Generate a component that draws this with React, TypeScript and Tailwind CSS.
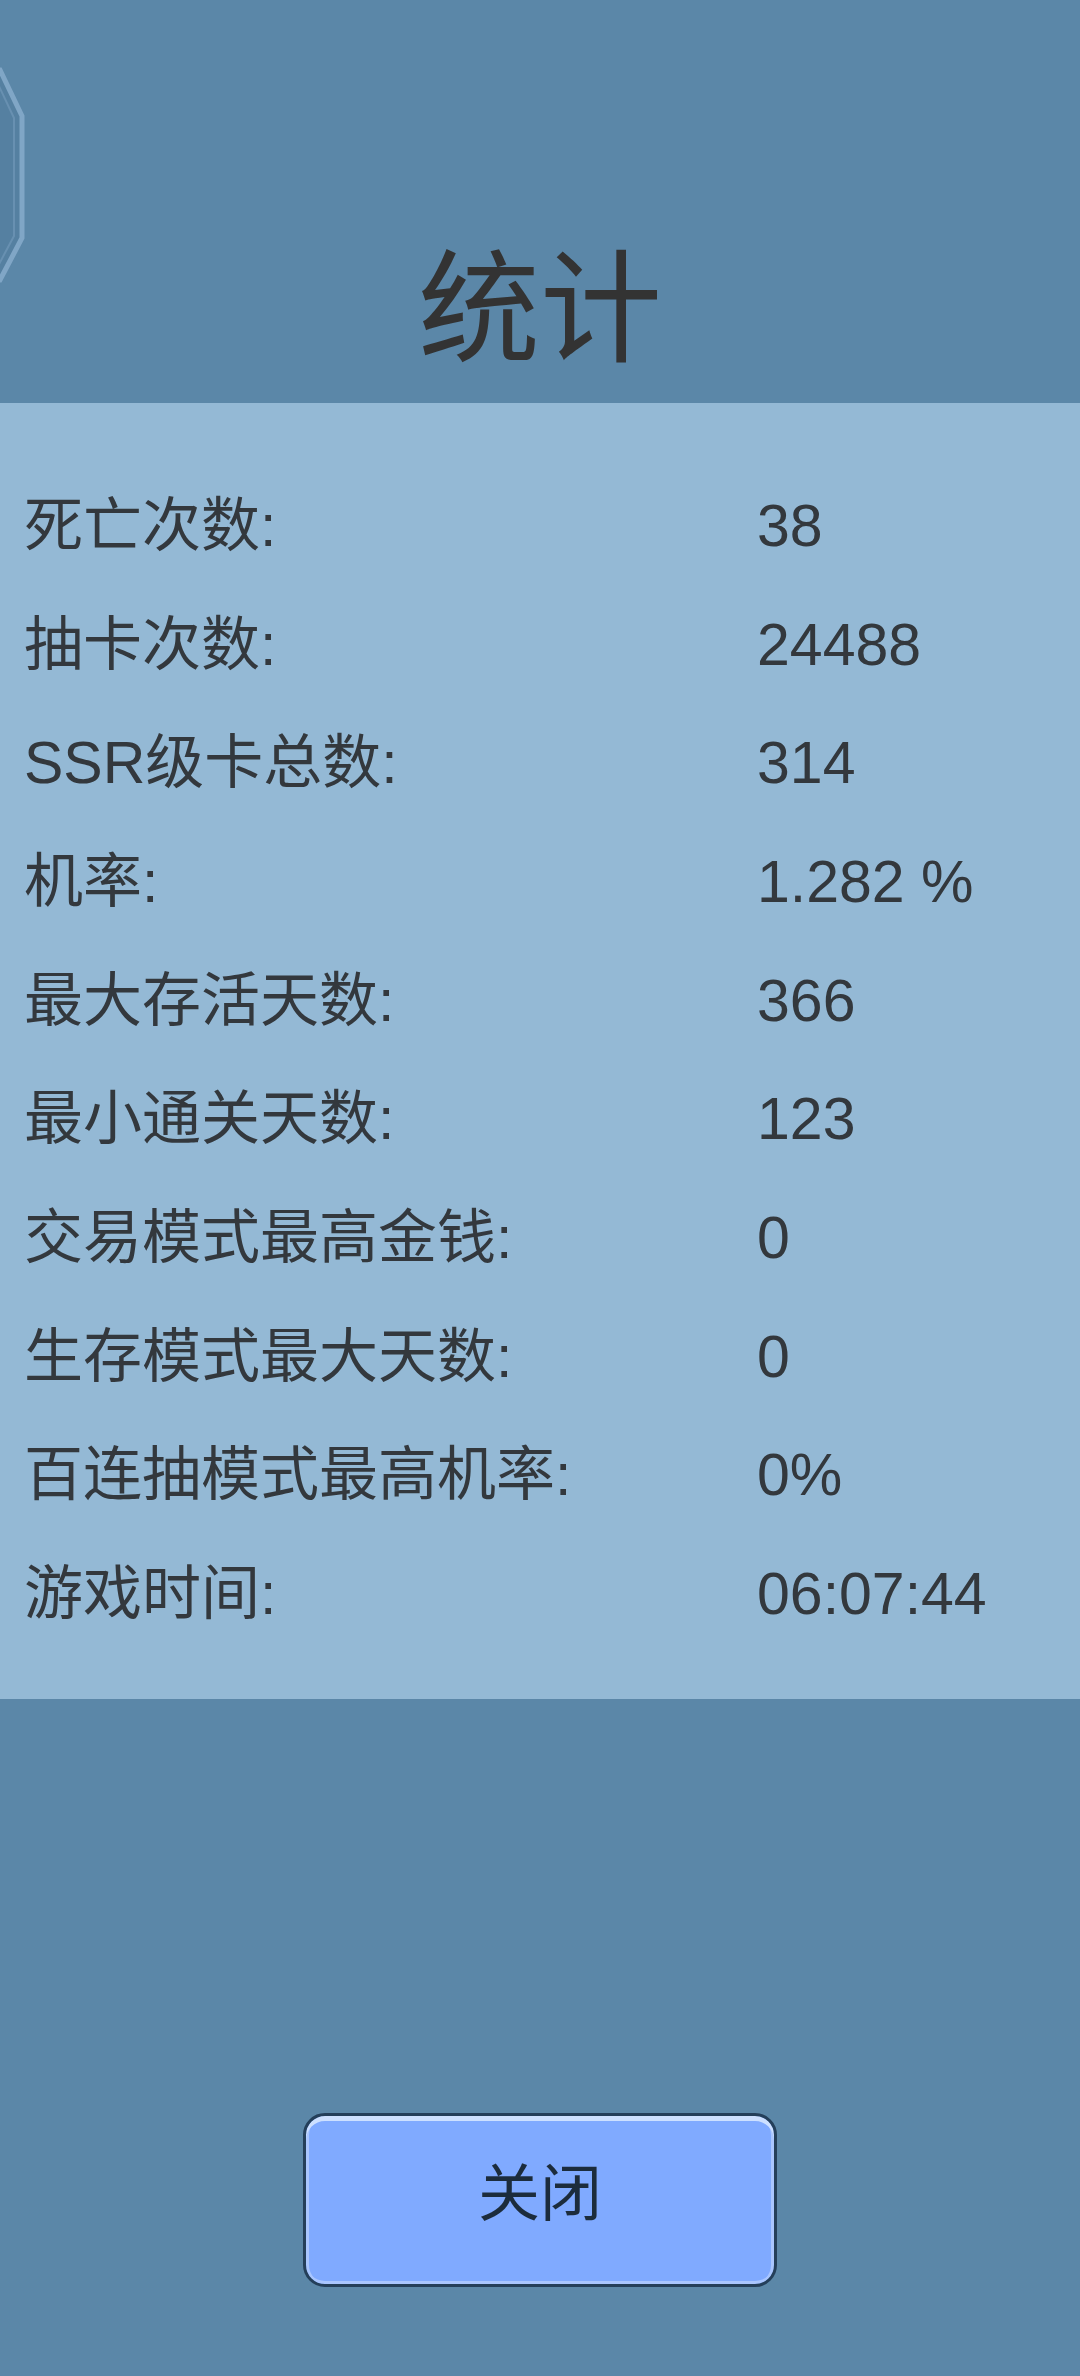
const stats = [
  { label: '死亡次数:', value: '38' },
  { label: '抽卡次数:', value: '24488' },
  { label: 'SSR级卡总数:', value: '314' },
  { label: '机率:', value: '1.282 %' },
  { label: '最大存活天数:', value: '366' },
  { label: '最小通关天数:', value: '123' },
  { label: '交易模式最高金钱:', value: '0' },
  { label: '生存模式最大天数:', value: '0' },
  { label: '百连抽模式最高机率:', value: '0%' },
  { label: '游戏时间:', value: '06:07:44' },
];

export default function App() {
  return (
    <div
      className="relative w-[1080px] h-[2376px] overflow-hidden bg-[#5b87a8] flex flex-col text-[#33383d]"
      style={{ fontFamily: '"Liberation Sans", "Noto Sans CJK SC", sans-serif' }}
    >
      {/* half-hidden side button */}
      <svg className="absolute left-0 top-0" width="40" height="300" viewBox="0 0 40 300">
        <polygon points="-40,70 0,70 22,116 22,238 0,280 -40,280" fill="#5580a1" stroke="#80a6c6" strokeWidth="5" />
        <polygon points="-40,84 -2,84 14,118 14,236 -2,266 -40,266" fill="none" stroke="#6890b1" strokeWidth="2" />
      </svg>

      {/* Title */}
      <div className="h-[403px] flex justify-center pt-[249px]">
        <h1 className="text-[122px] leading-none text-[#333333]">统计</h1>
      </div>

      {/* Stats panel */}
      <div className="h-[1296px] bg-[#94b9d5] pt-[64px] pl-[24px]">
        {stats.map(({ label, value }) => (
          <div key={label} className="h-[118.7px] grid grid-cols-[733px_1fr] items-center text-[59px] leading-none">
            <span>{label}</span>
            <span>{value}</span>
          </div>
        ))}
      </div>

      {/* Close button */}
      <div className="flex justify-center mt-[414px]">
        <button className="w-[474px] h-[174px] pb-[10px] rounded-[22px] border-[3px] border-[#243f5a] bg-[#80aaff] shadow-[inset_0_5px_0_#cde0ff,inset_3px_0_0_#a9c6ff,inset_-3px_0_0_#a9c6ff,inset_0_-3px_0_#a9c6ff] flex items-center justify-center">
          <span className="text-[62px] leading-none text-[#1c2c3c]">关闭</span>
        </button>
      </div>
    </div>
  );
}
